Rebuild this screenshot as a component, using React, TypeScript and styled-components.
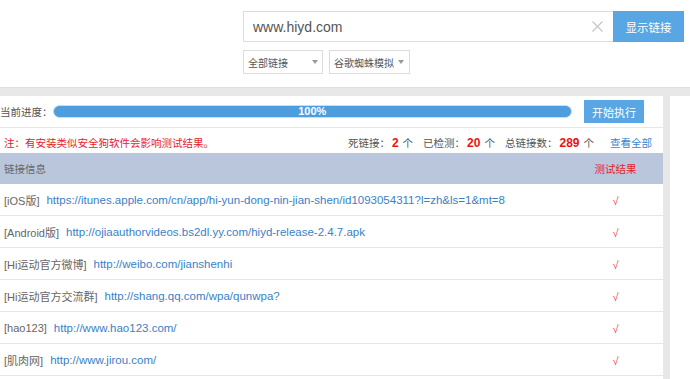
import React from "react";
import styled, { createGlobalStyle } from "styled-components";

const Global = createGlobalStyle`
  html, body { margin: 0; padding: 0; background: #fff; }
  body { font-family: "Liberation Sans", "Noto Sans CJK SC", sans-serif; color: #555; overflow: hidden; }
  * { box-sizing: border-box; }
`;

const Page = styled.div`
  width: 690px;
  height: 379px;
  display: flex;
  flex-direction: column;
`;

const Top = styled.div`
  height: 88px;
  padding: 11px 6px 0 243px;
  display: flex;
  flex-direction: column;
  gap: 8px;
  border-bottom: 1px solid #dedede;
`;

const SearchRow = styled.div`
  display: flex;
  height: 31px;
`;

const SearchBox = styled.div`
  flex: 1;
  border: 1px solid #dcdcdc;
  border-right: none;
  display: flex;
  align-items: center;
  padding: 0 10px 0 9px;
  font-family: "Liberation Sans", sans-serif;
  font-size: 14px;
  color: #555;
`;

const SearchText = styled.span`
  flex: 1;
`;

const BlueButton = styled.button<{ $w: number; $h: number }>`
  width: ${(p) => p.$w}px;
  height: ${(p) => p.$h}px;
  border: none;
  background: #58a6e3;
  color: #fff;
  font-family: "Noto Sans CJK SC", sans-serif;
  font-size: ${(p) => (p.$h > 28 ? 11.5 : 11)}px;
  padding: 0;
  cursor: pointer;
`;

const SelectRow = styled.div`
  display: flex;
  gap: 6px;
`;

const Select = styled.div<{ $w: number }>`
  width: ${(p) => p.$w}px;
  height: 24px;
  border: 1px solid #dcdcdc;
  display: flex;
  align-items: center;
  padding: 0 0 0 4px;
  font-family: "Noto Sans CJK SC", sans-serif;
  font-size: 10px;
  color: #555;
  white-space: nowrap;
`;

const Caret = styled.span<{ $gap: number }>`
  margin-left: ${(p) => p.$gap}px;
  width: 0;
  height: 0;
  border-left: 3px solid transparent;
  border-right: 3px solid transparent;
  border-top: 4px solid #999;
`;

const Band = styled.div`
  height: 8px;
  background: #e8e8e8;
`;

const Body = styled.div`
  flex: 1;
  display: flex;
  min-height: 0;
`;

const Panel = styled.div`
  width: 663px;
  display: flex;
  flex-direction: column;
`;

const Scroll = styled.div`
  width: 7px;
  background: #e8e8e8;
`;

const ProgressRow = styled.div`
  height: 32px;
  display: flex;
  align-items: center;
  padding: 0 19px 0 0;
  border-bottom: 1px solid #e4e8ee;
  font-family: "Noto Sans CJK SC", sans-serif;
  font-size: 10.5px;
  color: #555;
`;

const Bar = styled.div`
  flex: 1;
  margin: 0 12px 0 0;
  height: 13px;
  border-radius: 7px;
  border: 1px solid #c9def0;
  background: #4d9ede;
  display: flex;
  align-items: center;
  justify-content: center;
  color: #fff;
  font-family: "Liberation Sans", sans-serif;
  font-weight: bold;
  font-size: 11px;
  line-height: 1;
`;

const NoticeRow = styled.div`
  height: 25px;
  display: flex;
  align-items: center;
  justify-content: space-between;
  padding: 4px 11px 0 4px;
  font-family: "Noto Sans CJK SC", sans-serif;
  font-size: 10.5px;
`;

const Warn = styled.span`
  color: #e8202a;
`;

const Stats = styled.div`
  display: flex;
  align-items: center;
  color: #555;
`;

const Stat = styled.span`
  margin-right: 10px;
`;

const Num = styled.b`
  color: #e11;
  font-family: "Liberation Sans", sans-serif;
  font-size: 12px;
  margin: 0 4px 0 2px;
`;

const ViewAll = styled.a`
  color: #3d85cf;
  text-decoration: none;
  margin-left: 6px;
`;

const Header = styled.div`
  height: 31px;
  background: #bac6dc;
  display: flex;
  align-items: center;
  font-family: "Noto Sans CJK SC", sans-serif;
  font-size: 10.5px;
  color: #666;
`;

const InfoCol = styled.div`
  flex: 1;
  padding-left: 4px;
  display: flex;
  align-items: center;
  min-width: 0;
`;

const ResultCol = styled.div`
  width: 94px;
  text-align: center;
  padding-right: 1px;
  color: #e8202a;
`;

const Row = styled.div`
  height: 32px;
  display: flex;
  align-items: center;
  border-bottom: 1px solid #e6e6e6;
  flex-shrink: 0;
`;

const Label = styled.span`
  color: #666;
  font-family: "Liberation Sans", "Noto Sans CJK SC", sans-serif;
  font-size: 11px;
  margin-right: 7px;
  white-space: nowrap;
`;

const Url = styled.a`
  color: #3a7fc6;
  font-family: "Liberation Sans", sans-serif;
  font-size: 11.5px;
  text-decoration: none;
  white-space: nowrap;
`;

const Check = styled.span`
  color: #ec4654;
  font-family: "Liberation Sans", sans-serif;
  font-size: 11px;
`;

const ClearIcon = () => (
  <svg width="11" height="11" viewBox="0 0 11 11" style={{ flexShrink: 0 }}>
    <path d="M0.5 0.5L10.5 10.5M10.5 0.5L0.5 10.5" stroke="#c4c4c4" strokeWidth="1.1" fill="none" />
  </svg>
);

const rows = [
  ["[iOS版]", "https://itunes.apple.com/cn/app/hi-yun-dong-nin-jian-shen/id1093054311?l=zh&ls=1&mt=8"],
  ["[Android版]", "http://ojiaauthorvideos.bs2dl.yy.com/hiyd-release-2.4.7.apk"],
  ["[Hi运动官方微博]", "http://weibo.com/jianshenhi"],
  ["[Hi运动官方交流群]", "http://shang.qq.com/wpa/qunwpa?"],
  ["[hao123]", "http://www.hao123.com/"],
  ["[肌肉网]", "http://www.jirou.com/"],
];

export default function App() {
  return (
    <Page>
      <Global />
      <Top>
        <SearchRow>
          <SearchBox>
            <SearchText>www.hiyd.com</SearchText>
            <ClearIcon />
          </SearchBox>
          <BlueButton $w={71} $h={31}>显示链接</BlueButton>
        </SearchRow>
        <SelectRow>
          <Select $w={80}>
            全部链接<Caret $gap={24} />
          </Select>
          <Select $w={81}>
            谷歌蜘蛛模拟<Caret $gap={4} />
          </Select>
        </SelectRow>
      </Top>
      <Band />
      <Body>
        <Panel>
          <ProgressRow>
            当前进度：
            <Bar>100%</Bar>
            <BlueButton $w={60} $h={23}>开始执行</BlueButton>
          </ProgressRow>
          <NoticeRow>
            <Warn>注：有安装类似安全狗软件会影响测试结果。</Warn>
            <Stats>
              <Stat>死链接：<Num>2</Num>个</Stat>
              <Stat>已检测：<Num>20</Num>个</Stat>
              <Stat>总链接数：<Num>289</Num>个</Stat>
              <ViewAll href="#">查看全部</ViewAll>
            </Stats>
          </NoticeRow>
          <Header>
            <InfoCol>链接信息</InfoCol>
            <ResultCol>测试结果</ResultCol>
          </Header>
          {rows.map(([l, u]) => (
            <Row key={u}>
              <InfoCol>
                <Label>{l}</Label>
                <Url href="#">{u}</Url>
              </InfoCol>
              <ResultCol>
                <Check>√</Check>
              </ResultCol>
            </Row>
          ))}
        </Panel>
        <Scroll />
      </Body>
    </Page>
  );
}
